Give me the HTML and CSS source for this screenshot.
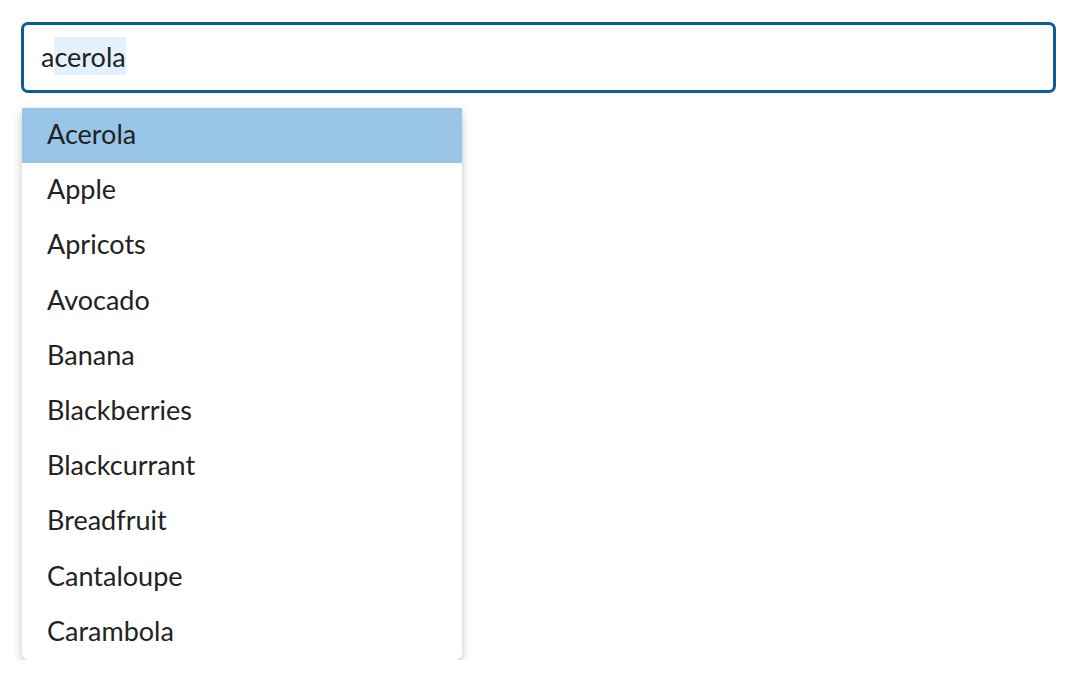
FILE: index.html
```html
<!DOCTYPE html>
<html lang="en">
<head>
    <meta charset="UTF-8">
    <meta name="viewport" content="width=device-width, initial-scale=1.0">
    <title>Autocomplete</title>
    <link rel="stylesheet" href="styles.css">
</head>
<body>

<div class="combo">
    <div class="search-box">
        <span class="typed">a</span><span class="suggest">cerola</span>
    </div>

    <ul class="listbox">
        <li class="option active">Acerola</li>
        <li class="option">Apple</li>
        <li class="option">Apricots</li>
        <li class="option">Avocado</li>
        <li class="option">Banana</li>
        <li class="option">Blackberries</li>
        <li class="option">Blackcurrant</li>
        <li class="option">Breadfruit</li>
        <li class="option">Cantaloupe</li>
        <li class="option">Carambola</li>
    </ul>
</div>

</body>
</html>
```

FILE: styles.css
```css
body {
    font-family: Lato, "Open Sans", sans-serif;
    background-color: #fff;
    margin: 0;
    padding: 0;
    color: #222;
}

.combo {
    padding: 22px 20px 0 21px;
}

.search-box {
    box-sizing: border-box;
    height: 71px;
    border: 3px solid #0b5d96;
    border-radius: 7px;
    padding: 0 17px 3px;
    display: flex;
    align-items: center;
    font-size: 27px;
}

.suggest {
    background-color: #e3f1fc;
    line-height: 36px;
    padding-top: 2px;
}

.listbox {
    list-style: none;
    width: 440px;
    margin: 15px 0 0 1px;
    padding: 0;
    background-color: #fff;
    border-radius: 0 0 7px 7px;
    box-shadow: 0 4px 10px rgba(0, 0, 0, 0.24);
    overflow: hidden;
}

.option {
    height: 55.2px;
    box-sizing: border-box;
    line-height: 52px;
    padding: 0 25px 3px;
    font-size: 27px;
}

.option.active {
    background-color: #99c5e6;
}
```
